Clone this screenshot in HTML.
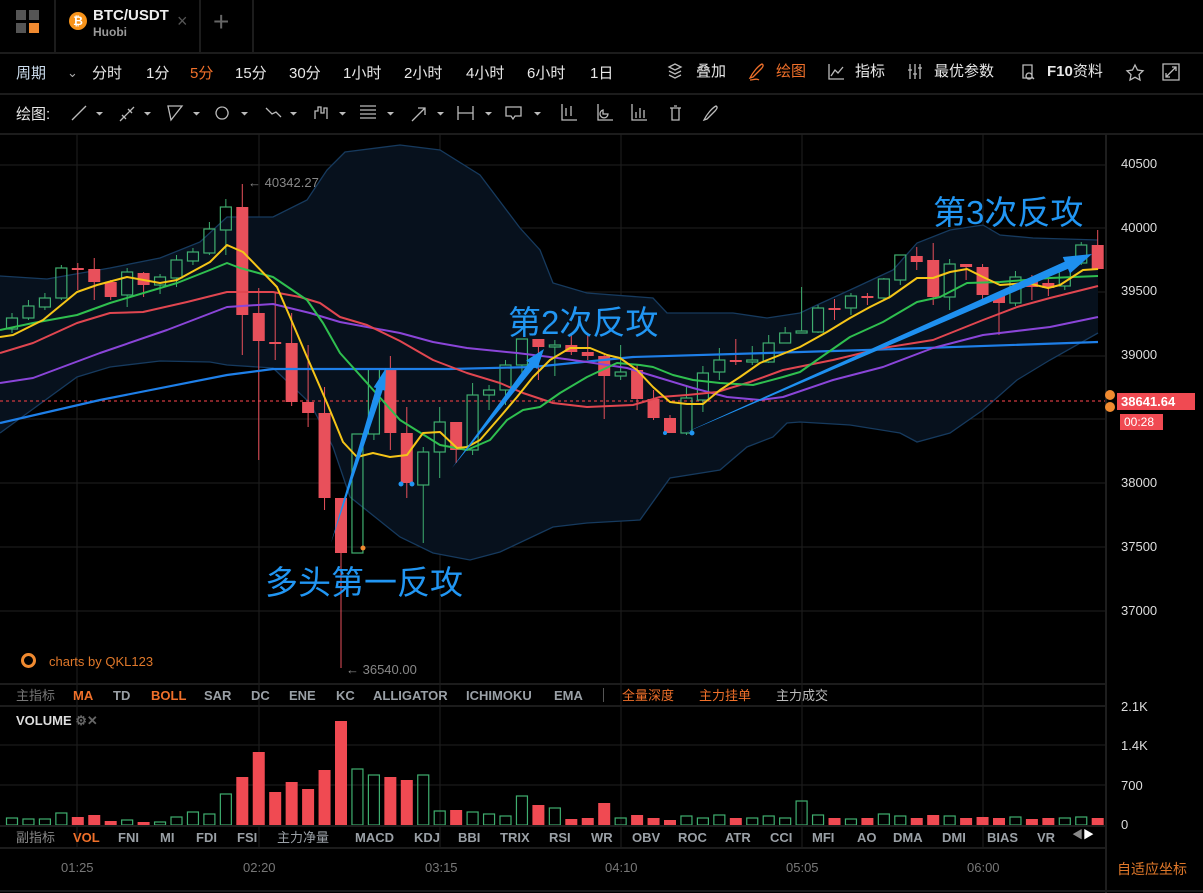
<!DOCTYPE html>
<html><head><meta charset="utf-8">
<style>
*{margin:0;padding:0;box-sizing:border-box}
body{width:1203px;height:893px;background:#000;overflow:hidden;font-family:"Liberation Sans","Noto Sans CJK SC",sans-serif;color:#ddd;position:relative}
.t{position:absolute;white-space:nowrap;line-height:1}
.hl{position:absolute;left:0;width:1203px;height:2px;background:#1c1c1c}
.vl{position:absolute;width:1px;background:#222}
.w{color:#e8e8e8;font-size:15px}
.g{color:#9aa0a6;font-size:13px;font-weight:bold}
.o{color:#f0702a}
svg{position:absolute;left:0;top:0}
</style></head><body>
<div style="position:absolute;left:16px;top:10px;width:10px;height:10px;background:#555"></div>
<div style="position:absolute;left:29px;top:10px;width:10px;height:10px;background:#555"></div>
<div style="position:absolute;left:16px;top:23px;width:10px;height:10px;background:#555"></div>
<div style="position:absolute;left:29px;top:23px;width:10px;height:10px;background:#f08a30"></div>
<div class="vl" style="left:54px;top:0;height:52px;background:#1c1c1c;width:2px"></div>
<div style="position:absolute;left:69px;top:12px;width:18px;height:18px;border-radius:50%;background:#f7931a;color:#fff;font-size:12px;font-weight:bold;text-align:center;line-height:18px">₿</div>
<div class="t" style="left:93px;top:8px;font-size:15px;font-weight:bold;color:#eee">BTC/USDT</div>
<div class="t" style="left:93px;top:26px;font-size:12px;color:#999;font-weight:bold">Huobi</div>
<div class="t" style="left:177px;top:12px;font-size:18px;color:#555">×</div>
<div class="vl" style="left:199px;top:0;height:52px;background:#1c1c1c;width:2px"></div>
<div class="t" style="left:213px;top:8px;font-size:28px;color:#666">+</div>
<div class="vl" style="left:252px;top:0;height:52px;background:#1c1c1c;width:2px"></div>
<div class="hl" style="top:52px"></div>
<div class="t w" style="left:16px;top:66px;color:#cde">周期</div>
<div class="t" style="left:67px;top:66px;font-size:13px;color:#aaa">⌄</div>
<div class="t w" style="left:92px;top:66px">分时</div>
<div class="t w" style="left:146px;top:66px">1分</div>
<div class="t w o" style="left:190px;top:66px">5分</div>
<div class="t w" style="left:235px;top:66px">15分</div>
<div class="t w" style="left:289px;top:66px">30分</div>
<div class="t w" style="left:343px;top:66px">1小时</div>
<div class="t w" style="left:404px;top:66px">2小时</div>
<div class="t w" style="left:466px;top:66px">4小时</div>
<div class="t w" style="left:527px;top:66px">6小时</div>
<div class="t w" style="left:590px;top:66px">1日</div>
<div class="t w" style="left:696px;top:64px">叠加</div>
<div class="t w o" style="left:776px;top:64px">绘图</div>
<div class="t w" style="left:855px;top:64px">指标</div>
<div class="t w" style="left:934px;top:64px">最优参数</div>
<div class="t w" style="left:1047px;top:64px;font-weight:bold">F10<span style="font-weight:normal">资料</span></div>
<div class="hl" style="top:93px"></div>
<div class="t w" style="left:16px;top:107px">绘图:</div>
<div class="hl" style="top:133px"></div>

<svg width="1203" height="893" id="s">
<g fill="none" stroke="#bbb" stroke-width="1.3">
 <path d="M669 67l6-3 6 3-6 3z M669 71l6 3 6-3 M669 75l6 3 6-3"/>
 <path d="M750 78c3-6 8-12 12-14 2 1 1 3-1 5l-8 8z M750 80c4 0 6-2 9 0" stroke="#f0702a"/>
 <path d="M829 64v15h15 M831 76l4-6 3 3 5-6"/>
 <path d="M910 64v15 M915 64v15 M920 64v15 M908 70h4 M913 74h4 M918 68h4"/>
 <path d="M1023 65h9v13h-9z M1029 73a3 3 0 1 0 .1 0 M1032 77l2 2"/>
 <path d="M1135 65l2.5 5 5.5.8-4 3.8 1 5.4-5-2.7-5 2.7 1-5.4-4-3.8 5.5-.8z"/>
 <path d="M1163 64h16v16h-16z M1166 77l5-5 M1166 73v4h4 M1176 67l-5 5 M1176 71v-4h-4"/>
 <path d="M72 120l14-14"/>
 <path d="M120 121l14-14 M122 115l4 4 M128 109l4 4"/>
 <path d="M168 106h14l-11 14z"/>
 <path d="M222 107a6 6 0 1 0 .1 0"/>
 <path d="M266 108l6 6 4-2 5 5"/>
 <path d="M315 119v-8h3v-4h3v6h3v-5h3v11"/>
 <path d="M360 106h16 M360 110h16 M360 114h16 M360 118h16"/>
 <path d="M412 121l13-13 M418 108h7v7"/>
 <path d="M458 106v14 M473 106v14 M458 113h15"/>
 <path d="M506 107h15v9h-6l-2 3-2-3h-5z"/>
 <path d="M562 104v16h15 M566 108v8 M571 106v10"/>
 <path d="M598 104v16h15 M603 110a4 4 0 1 0 5 4h-5z"/>
 <path d="M632 104v16h15 M636 112v6 M640 108v10 M644 110v8"/>
 <path d="M670 108h11 M672 108v12h7v-12 M674 106h3"/>
 <path d="M704 120c3-6 8-12 12-14 2 1 1 3-1 5l-8 8z"/>
</g>
<g fill="#bbb"><path d="M96 112h7l-3.5 3.5z M144 112h7l-3.5 3.5z M193 112h7l-3.5 3.5z M241 112h7l-3.5 3.5z M290 112h7l-3.5 3.5z M339 112h7l-3.5 3.5z M387 112h7l-3.5 3.5z M437 112h7l-3.5 3.5z M485 112h7l-3.5 3.5z M534 112h7l-3.5 3.5z"/></g>
<g id="chart"></g>
</svg>

<div class="vl" style="left:1105px;top:134px;height:759px;background:#1e1e1e;width:2px"></div>
<div class="t" style="left:1121px;top:157px;font-size:13px;color:#ddd">40500</div>
<div class="t" style="left:1121px;top:221px;font-size:13px;color:#ddd">40000</div>
<div class="t" style="left:1121px;top:284px;font-size:13px;color:#ddd">39500</div>
<div class="t" style="left:1121px;top:348px;font-size:13px;color:#ddd">39000</div>
<div class="t" style="left:1121px;top:476px;font-size:13px;color:#ddd">38000</div>
<div class="t" style="left:1121px;top:540px;font-size:13px;color:#ddd">37500</div>
<div class="t" style="left:1121px;top:604px;font-size:13px;color:#ddd">37000</div>
<div style="position:absolute;left:1117px;top:393px;width:78px;height:17px;background:#f04a52"></div>
<div class="t" style="left:1121px;top:395px;font-size:13px;color:#fff;font-weight:bold">38641.64</div>
<div style="position:absolute;left:1120px;top:414px;width:43px;height:16px;background:#f04a52"></div>
<div class="t" style="left:1124px;top:416px;font-size:12px;color:#fff">00:28</div>
<div style="position:absolute;left:1105px;top:390px;width:10px;height:10px;border-radius:50%;background:#f08a30"></div>
<div style="position:absolute;left:1105px;top:402px;width:10px;height:10px;border-radius:50%;background:#f08a30"></div>

<div class="t" style="left:248px;top:176px;font-size:13px;color:#888">← 40342.27</div>
<div class="t" style="left:346px;top:663px;font-size:13px;color:#888">← 36540.00</div>
<div class="t" style="left:265px;top:566px;font-size:33px;color:#2196f3">多头第一反攻</div>
<div class="t" style="left:508px;top:306px;font-size:33px;color:#2196f3">第2次反攻</div>
<div class="t" style="left:933px;top:196px;font-size:33px;color:#2196f3">第3次反攻</div>
<div style="position:absolute;left:21px;top:653px;width:15px;height:15px;border:3px solid #f08a30;border-radius:50%"></div>
<div class="t" style="left:49px;top:655px;font-size:13px;color:#e0782a">charts by QKL123</div>

<div class="hl" style="top:683px;width:1105px"></div>
<div class="t g" style="left:16px;top:689px;color:#777;font-weight:normal">主指标</div>
<div class="t g o" style="left:73px;top:689px">MA</div>
<div class="t g" style="left:113px;top:689px">TD</div>
<div class="t g o" style="left:151px;top:689px">BOLL</div>
<div class="t g" style="left:204px;top:689px">SAR</div>
<div class="t g" style="left:251px;top:689px">DC</div>
<div class="t g" style="left:289px;top:689px">ENE</div>
<div class="t g" style="left:336px;top:689px">KC</div>
<div class="t g" style="left:373px;top:689px">ALLIGATOR</div>
<div class="t g" style="left:466px;top:689px">ICHIMOKU</div>
<div class="t g" style="left:554px;top:689px">EMA</div>
<div class="vl" style="left:603px;top:688px;height:14px;background:#555"></div>
<div class="t g o" style="left:622px;top:689px;font-weight:normal">全量深度</div>
<div class="t g o" style="left:699px;top:689px;font-weight:normal">主力挂单</div>
<div class="t g" style="left:776px;top:689px;font-weight:normal;color:#bbb">主力成交</div>
<div class="hl" style="top:705px;width:1105px"></div>
<div class="t" style="left:16px;top:714px;font-size:13px;color:#ddd;font-weight:bold">VOLUME <span style="color:#666">⚙✕</span></div>
<div class="t" style="left:1121px;top:700px;font-size:13px;color:#ddd">2.1K</div>
<div class="t" style="left:1121px;top:739px;font-size:13px;color:#ddd">1.4K</div>
<div class="t" style="left:1121px;top:779px;font-size:13px;color:#ddd">700</div>
<div class="t" style="left:1121px;top:818px;font-size:13px;color:#ddd">0</div>
<div class="hl" style="top:825px;width:1105px"></div>
<div class="t g" style="left:16px;top:831px;color:#888;font-weight:normal">副指标</div>
<div class="t g o" style="left:73px;top:831px">VOL</div>
<div class="t g" style="left:118px;top:831px">FNI</div>
<div class="t g" style="left:160px;top:831px">MI</div>
<div class="t g" style="left:196px;top:831px">FDI</div>
<div class="t g" style="left:237px;top:831px">FSI</div>
<div class="t g" style="left:277px;top:831px;font-weight:normal">主力净量</div>
<div class="t g" style="left:355px;top:831px">MACD</div>
<div class="t g" style="left:414px;top:831px">KDJ</div>
<div class="t g" style="left:458px;top:831px">BBI</div>
<div class="t g" style="left:500px;top:831px">TRIX</div>
<div class="t g" style="left:549px;top:831px">RSI</div>
<div class="t g" style="left:591px;top:831px">WR</div>
<div class="t g" style="left:632px;top:831px">OBV</div>
<div class="t g" style="left:678px;top:831px">ROC</div>
<div class="t g" style="left:725px;top:831px">ATR</div>
<div class="t g" style="left:770px;top:831px">CCI</div>
<div class="t g" style="left:812px;top:831px">MFI</div>
<div class="t g" style="left:857px;top:831px">AO</div>
<div class="t g" style="left:893px;top:831px">DMA</div>
<div class="t g" style="left:942px;top:831px">DMI</div>
<div class="t g" style="left:987px;top:831px">BIAS</div>
<div class="t g" style="left:1037px;top:831px">VR</div>
<div class="t" style="left:1072px;top:830px;font-size:11px;color:#888">◀<span style="color:#fff">▶</span></div>
<div class="hl" style="top:847px;width:1105px"></div>
<div class="t" style="left:61px;top:861px;font-size:13px;color:#777">01:25</div>
<div class="t" style="left:243px;top:861px;font-size:13px;color:#777">02:20</div>
<div class="t" style="left:425px;top:861px;font-size:13px;color:#777">03:15</div>
<div class="t" style="left:605px;top:861px;font-size:13px;color:#777">04:10</div>
<div class="t" style="left:786px;top:861px;font-size:13px;color:#777">05:05</div>
<div class="t" style="left:967px;top:861px;font-size:13px;color:#777">06:00</div>
<div class="t" style="left:1117px;top:862px;font-size:14px;color:#e0782a">自适应坐标</div>
<div class="hl" style="top:890px"></div>

<script>
var NS="http://www.w3.org/2000/svg",G=document.getElementById("chart");
function el(t,a){var e=document.createElementNS(NS,t);for(var k in a)e.setAttribute(k,a[k]);G.appendChild(e);return e}
[165,228,292,356,419,483,547,611].forEach(function(y){el("line",{x1:0,x2:1105,y1:y,y2:y,stroke:"#1f1f1f"})});
[745,785].forEach(function(y){el("line",{x1:0,x2:1105,y1:y,y2:y,stroke:"#1f1f1f"})});
[77,259,440,621,802,983].forEach(function(x){el("line",{x1:x,x2:x,y1:134,y2:848,stroke:"#1f1f1f"})});
function P(a){return a.map(function(p){return p[0]+","+p[1]}).join(" ")}
var up=[[0,276],[47,279],[110,268],[160,258],[200,242],[227,217],[273,217],[307,200],[327,170],[345,152],[400,145],[440,150],[480,175],[520,228],[540,250],[553,283],[587,293],[653,298],[667,313],[733,313],[767,318],[800,313],[817,305],[850,290],[893,270],[917,243],[950,230],[983,225],[1000,235],[1033,238],[1098,240]];
var lo=[[0,433],[77,377],[110,367],[160,361],[210,362],[227,365],[273,368],[310,403],[333,447],[350,497],[400,537],[433,553],[470,560],[500,552],[553,527],[587,523],[640,520],[670,478],[720,470],[747,447],[773,437],[787,423],[800,422],[850,425],[900,433],[917,442],[950,433],[983,410],[1017,380],[1050,360],[1098,333]];
el("polygon",{points:P(up.concat(lo.slice().reverse())),fill:"#07111d"});
el("polyline",{points:P(up),fill:"none",stroke:"#163a5e","stroke-width":1.3});
el("polyline",{points:P(lo),fill:"none",stroke:"#163a5e","stroke-width":1.3});
el("line",{x1:0,x2:1105,y1:401,y2:401,stroke:"#d03a40","stroke-dasharray":"3,3","stroke-width":1.3});
var C=[[318,329,313,333,1],[306,318,300,320,1],[298,307,293,310,1],[268,298,265,300,1],[268,270,263,290,0],[269,282,258,300,0],[282,297,280,300,0],[272,295,268,307,1],[273,285,272,297,0],[277,285,274,294,1],[260,278,255,287,1],[252,261,248,265,1],[229,253,222,255,1],[207,230,199,255,1],[207,315,184,355,0],[313,341,288,460,0],[342,344,292,360,0],[343,402,313,406,0],[402,413,345,427,0],[413,498,387,510,0],[498,553,498,668,0],[434,553,434,553,1],[369,434,369,440,1],[369,433,356,450,0],[433,483,407,498,0],[452,485,447,543,1],[422,452,407,478,1],[422,450,422,463,0],[395,450,383,455,1],[390,395,385,410,1],[365,390,360,405,1],[339,365,339,378,1],[339,347,339,380,0],[345,347,340,376,1],[345,352,333,355,0],[352,356,335,360,0],[356,376,355,419,0],[372,376,345,380,1],[370,399,365,410,0],[399,418,390,420,0],[418,433,415,433,0],[398,433,385,435,1],[373,400,366,412,1],[360,372,348,380,1],[360,362,339,365,0],[360,362,346,365,1],[343,362,335,363,1],[333,343,327,343,1],[331,333,287,333,1],[308,332,305,333,1],[308,309,299,320,0],[296,308,293,315,1],[296,297,293,305,0],[279,298,278,300,1],[255,280,255,285,1],[256,262,247,270,0],[260,297,243,305,0],[264,297,259,310,1],[264,267,264,280,0],[267,295,264,302,0],[295,303,295,335,0],[277,303,271,306,1],[280,287,275,300,0],[283,288,270,296,0],[265,286,262,290,1],[245,263,242,265,1],[245,269,230,270,0]];
var V=[818,819,819,813,817,815,821,820,822,822,817,812,814,794,777,752,792,782,789,770,721,769,775,777,780,775,811,810,812,814,816,796,805,808,819,818,803,818,815,818,820,816,818,815,818,818,816,818,801,815,818,819,818,814,816,818,815,816,818,817,818,817,819,818,818,817,818];
C.forEach(function(c,i){var x=12+16.45*i,gr=c[4],col=gr?"#3fae6f":"#e8505b";
 if(gr){el("line",{x1:x,x2:x,y1:c[2],y2:c[0],stroke:col});el("line",{x1:x,x2:x,y1:c[1],y2:c[3],stroke:col});
  el("rect",{x:x-5.5,y:c[0],width:11,height:Math.max(1,c[1]-c[0]),fill:"none",stroke:col,"stroke-width":1.2});}
 else{el("line",{x1:x,x2:x,y1:c[2],y2:c[3],stroke:col});el("rect",{x:x-6,y:c[0],width:12,height:Math.max(2,c[1]-c[0]),fill:col});}
 var v=V[i],vc=gr?"#3fae6f":"#f04a52";
 if(gr)el("rect",{x:x-5.5,y:v,width:11,height:825-v,fill:"none",stroke:vc,"stroke-width":1.2});
 else el("rect",{x:x-6,y:v,width:12,height:825-v,fill:vc});
});
function L(a,c,w){el("polyline",{points:P(a),fill:"none",stroke:c,"stroke-width":w||2,"stroke-linejoin":"round"})}
L([[0,423],[100,400],[227,375],[273,369],[450,369],[533,367],[633,357],[800,352],[867,350],[1098,342]],"#1e7fe8",2.2);
L([[0,383],[33,378],[100,353],[167,330],[227,307],[273,304],[310,313],[340,322],[367,327],[400,333],[433,342],[467,348],[517,353],[550,357],[587,362],[627,368],[660,378],[693,388],[727,397],[760,400],[783,397],[833,380],[883,367],[933,348],[983,335],[1050,327],[1098,317]],"#8a45d8");
L([[0,353],[33,343],[77,323],[110,313],[143,312],[187,302],[227,292],[273,292],[300,297],[320,303],[340,317],[367,325],[400,341],[433,360],[467,373],[500,383],[523,393],[553,403],[587,407],[633,405],[660,397],[687,395],[717,392],[750,382],[783,370],[833,360],[883,348],[933,340],[983,320],[1017,307],[1050,298],[1098,286]],"#e04650");
L([[0,330],[33,323],[77,315],[110,303],[177,283],[210,270],[227,263],[240,268],[273,277],[307,300],[323,323],[340,353],[367,383],[400,420],[440,445],[467,450],[490,440],[507,420],[523,410],[540,407],[560,393],[587,377],[617,363],[640,365],[653,367],[673,375],[693,380],[720,383],[753,385],[783,377],[800,372],[817,360],[850,337],[883,322],[917,302],[940,297],[967,283],[1000,282],[1050,278],[1098,276]],"#2fbf4f");
L([[0,337],[13,335],[43,320],[77,292],[97,285],[127,277],[160,283],[177,280],[210,262],[227,245],[243,252],[277,287],[290,317],[307,357],[327,403],[343,442],[357,457],[373,453],[390,457],[407,455],[423,433],[440,432],[457,448],[467,447],[480,440],[500,417],[517,397],[533,377],[550,360],[570,348],[590,348],[607,355],[620,358],[637,370],[653,387],[670,402],[687,404],[703,404],[720,390],[740,377],[760,363],[780,355],[800,347],[827,332],[850,318],[870,307],[890,297],[917,278],[933,278],[950,272],[967,269],[983,277],[1000,285],[1027,283],[1048,288],[1060,285],[1083,270],[1098,269]],"#f5c518");
el("circle",{cx:401,cy:484,r:2.5,fill:"#2196f3"});el("circle",{cx:412,cy:484,r:2.5,fill:"#2196f3"});
el("circle",{cx:665,cy:433,r:2,fill:"#2196f3"});el("circle",{cx:692,cy:433,r:2.5,fill:"#2196f3"});
el("circle",{cx:363,cy:548,r:2.5,fill:"#f08a30"});
function A(x1,y1,x2,y2,w,h,hw){var dx=x2-x1,dy=y2-y1,l=Math.sqrt(dx*dx+dy*dy),ux=dx/l,uy=dy/l,nx=-uy,ny=ux;
 var bx=x2-ux*h,by=y2-uy*h;
 el("polygon",{points:P([[x1,y1],[bx+nx*w,by+ny*w],[bx+nx*hw,by+ny*hw],[x2,y2],[bx-nx*hw,by-ny*hw],[bx-nx*w,by-ny*w]]),fill:"#1e90f0"});}
A(331,543,386,368,3.5,22,6);
A(452,468,544,349,3.5,20,7);
A(680,435,1092,254,4,28,9);
</script>
</body></html>
